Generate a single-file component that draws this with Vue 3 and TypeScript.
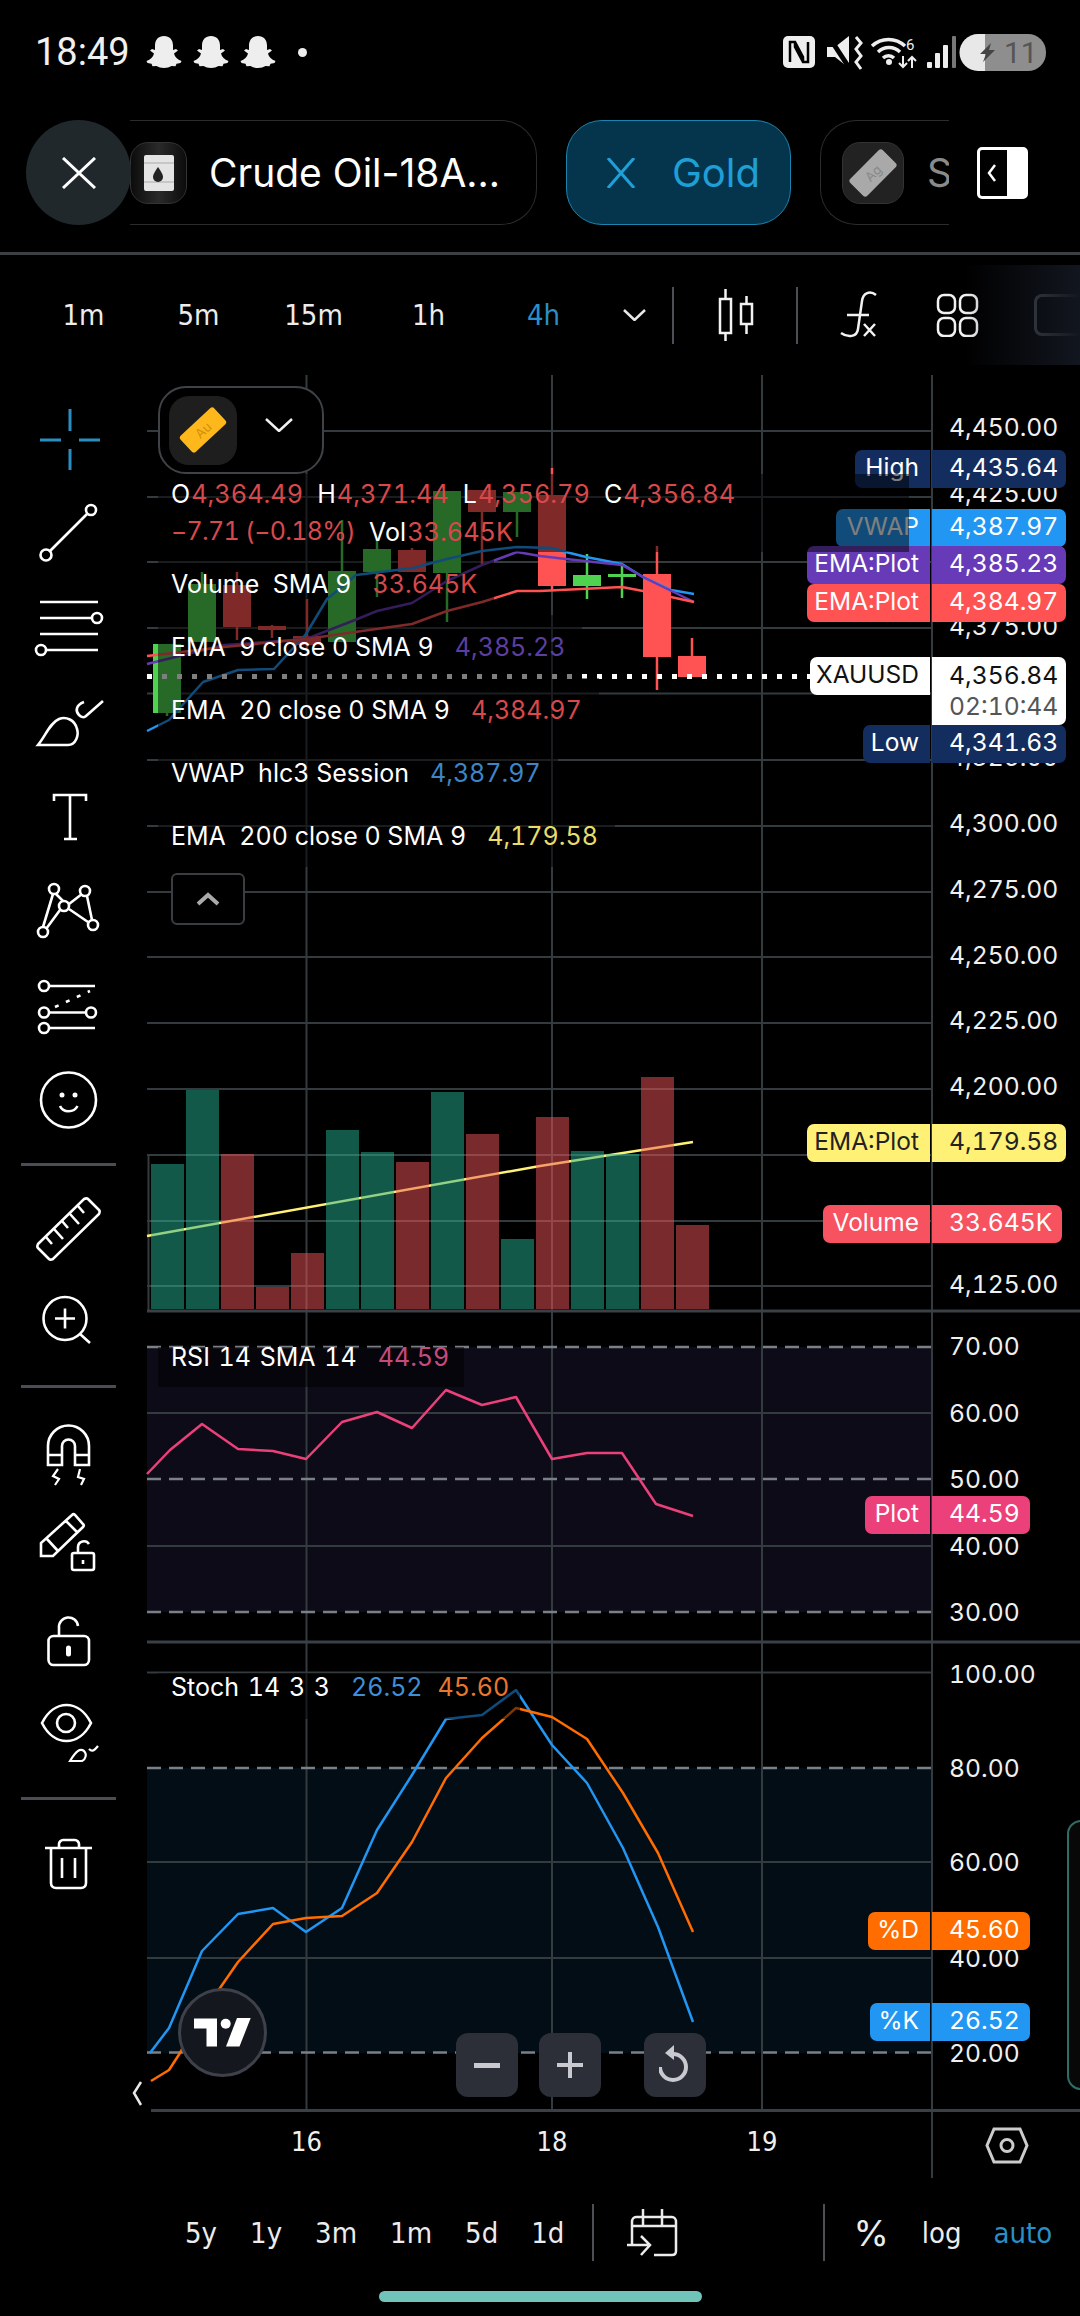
<template>
  <div class="phone">
    <!-- status bar -->
    <div class="status-bar">
      <span class="clock">18:49</span>
      <svg v-for="n in 3" :key="n" class="ghost" viewBox="0 0 36 33">
        <path d="M18 0c5.500 0 9 3.800 9 9.500v4.500l3-1 2 1.500-4 3c.8 3.500 3.500 6 7.500 7.500l-1 2-4 .8-1 2.500-4-.3c-2 1.200-4.500 2-7.500 2s-5.500-.8-7.500-2l-4 .3-1-2.500-4-.8-1-2c4-1.500 6.700-4 7.500-7.500l-4-3 2-1.500 3 1V9.500C9 3.800 12.500 0 18 0z" />
      </svg>
      <span class="status-dot"></span>
      <svg class="status-right" viewBox="770 20 290 70">
        <rect x="783" y="36" width="32" height="32" rx="5" fill="#eee" />
        <path d="M790 62V42h5l8 15v5M808 42v20h-5l-8-15v-5" fill="none" stroke="#000" stroke-width="2.500" />
        <path d="M827 47h8l14-11v32l-14-11h-8z" fill="#eee" />
        <path d="M829 37l21 32" stroke="#000" stroke-width="5" />
        <path d="M856 37l5 6-5 6 5 7-5 6 5 7" fill="none" stroke="#eee" stroke-width="3" />
        <g fill="none" stroke="#eee" stroke-width="3.500">
          <path d="M872 46a24 24 0 0 1 33 0" />
          <path d="M878 52a16 16 0 0 1 22 0" />
          <path d="M883 58a8 8 0 0 1 11 0" />
        </g>
        <circle cx="889" cy="62" r="3" fill="#eee" />
        <text x="906" y="50" class="wifi-six">6</text>
        <path d="M903 56v11m-4-4l4 4 4-4M912 68v-11m-4 4l4-4 4 4" fill="none" stroke="#eee" stroke-width="2" />
        <rect x="927" y="62" width="5" height="6" rx="1" fill="#eee" />
        <rect x="935" y="53" width="5" height="15" rx="1" fill="#eee" />
        <rect x="943" y="45" width="5" height="23" rx="1" fill="#eee" />
        <rect x="952" y="36" width="4" height="32" rx="1" fill="#777" />
        <rect x="967" y="34" width="79" height="37" rx="18" fill="#8e8e8e" />
        <path d="M978 34h7v37h-7a18 18 0 0 1 0-37z" fill="#e8e8e8" />
        <path d="M991 43l-11 11h6l-3 8 12-12h-6z" fill="#444" />
        <text x="1004" y="63" class="battery-text">11</text>
      </svg>
    </div>

    <!-- symbol tabs -->
    <div class="tabs">
      <button class="tabs-close" type="button">
        <svg width="34" height="32" viewBox="0 0 34 32"><path d="M1 1l32 30M33 1L1 31" /></svg>
      </button>
      <div class="tab tab-crude">
        <span class="tab-icon">
          <svg width="30" height="36" viewBox="0 0 30 36">
            <rect width="30" height="36" rx="2" fill="#e4e4e4" />
            <path d="M0 8h30M0 27h30" stroke="#aaa" stroke-width="1" />
            <path d="M14 12c-4 6-5 8-5 10a5 5 0 0 0 10 0c0-2-1-4-5-10z" fill="#222" />
          </svg>
        </span>
        <span class="tab-name">Crude Oil-18A...</span>
      </div>
      <div class="tab tab-gold">
        <svg width="28" height="30" viewBox="0 0 28 30"><path d="M1 0l26 30M27 0L1 30" /></svg>
        <span class="tab-name">Gold</span>
      </div>
      <div class="tab tab-silver">
        <span class="tab-icon">
          <span class="silver-bar">Ag</span>
        </span>
        <span class="tab-name">S</span>
      </div>
      <div class="panel-toggle">
        <svg width="12" height="20" viewBox="0 0 12 20"><path d="M9 2L3 10l6 8" /></svg>
      </div>
    </div>
    <div class="divider"></div>

    <!-- interval toolbar -->
    <div class="toolbar">
      <span v-for="t in intervals" :key="t" class="interval" :class="{ active: t === '4h' }">{{ t }}</span>
      <svg class="toolbar-chevron" width="67" height="12" viewBox="0 0 67 12"><path d="M23 1l10.500 10L44 1" /></svg>
      <span class="toolbar-sep"></span>
      <svg class="toolbar-icon" width="122" height="54" viewBox="674 287 122 54">
        <rect x="720" y="298" width="11" height="34" />
        <path d="M725.500 288v10M725.500 332v8" />
        <rect x="741" y="303" width="11" height="20" />
        <path d="M746.500 295v8M746.500 323v10" />
      </svg>
      <span class="toolbar-sep"></span>
      <svg class="toolbar-icon" width="120" height="50" viewBox="798 290 120 50">
        <path d="M876 295c-6-5-13-2-14 6l-4 28c-1 8-10 9-17 4" />
        <path d="M847 315h22M864 324l11 12M875 324l-11 12" />
      </svg>
      <svg class="toolbar-icon" width="78" height="44" viewBox="918 292 78 44">
        <rect x="938" y="294" width="17" height="18" rx="6" />
        <rect x="960" y="294" width="17" height="18" rx="6" />
        <rect x="938" y="317" width="17" height="18" rx="6" />
        <rect x="960" y="317" width="17" height="18" rx="6" />
      </svg>
      <span class="toolbar-cut"></span>
    </div>

    <!-- chart area -->
    <div class="workspace">
      <div class="sidebar">
        <svg class="tool" width="132" height="110" viewBox="0 370 132 110">
          <path class="blue" d="M40 440h21M79 440h21M70 409v22M70 449v21" />
        </svg>
        <svg class="tool" width="132" height="95" viewBox="0 480 132 95">
          <circle cx="91" cy="510" r="5" /><circle cx="46" cy="555" r="5.500" /><path d="M50 551l37-37" />
        </svg>
        <svg class="tool" width="132" height="95" viewBox="0 575 132 95">
          <path d="M40 602h58M40 618h52M40 634h58M46 650h52" />
          <circle cx="97" cy="618" r="5" /><circle cx="41" cy="650" r="5" />
        </svg>
        <svg class="tool" width="132" height="100" viewBox="0 670 132 100">
          <path d="M38 745h30c8 0 11-10 9-16-2-9-11-13-18-10-9 4-13 16-21 26z" />
          <path d="M84 702c-8 3-9 9-5 13 2 2 5 3 7 1l17-15" />
        </svg>
        <svg class="tool" width="132" height="90" viewBox="0 770 132 90">
          <path d="M54 801v-6h32v6M70 795v44M64 839h13" />
        </svg>
        <svg class="tool" width="132" height="95" viewBox="0 860 132 95">
          <path d="M56 894l7 7M69 904l13-10M87 896l5 24M69 909l19 13M53 894l-10 33M60 910l-14 19" />
          <circle cx="54" cy="889" r="5" /><circle cx="85" cy="891" r="5" /><circle cx="64" cy="906" r="5" />
          <circle cx="93" cy="925" r="5" /><circle cx="43" cy="932" r="5" />
        </svg>
        <svg class="tool" width="132" height="95" viewBox="0 955 132 95">
          <circle cx="44" cy="986" r="5" /><path d="M49 986h46" />
          <path class="dotted" d="M55 1007l35-16" />
          <circle cx="44" cy="1012.500" r="5" /><circle cx="91" cy="1012.500" r="5" /><path d="M49 1012.500h37" />
          <circle cx="44" cy="1028" r="5" /><path d="M49 1028h46" />
        </svg>
        <svg class="tool" width="132" height="100" viewBox="0 1050 132 100">
          <circle cx="68.500" cy="1100" r="27.500" />
          <circle class="solid" cx="62" cy="1095" r="2.500" /><circle class="solid" cx="75" cy="1095" r="2.500" />
          <path d="M60 1106c3 7 14 7 17.500 0" />
        </svg>
        <div class="tool-sep first"></div>
        <svg class="tool" width="132" height="114" viewBox="0 1166 132 114">
          <path d="M38 1244l46-45c2-1 3-1 4 0l11 11c1 1 1 2 0 4l-46 45c-2 1-3 1-4 0l-11-11c-1-1-1-2 0-4z" />
          <path d="M46 1237l6 7M54 1229l9 10M62 1221l6 7M70 1214l9 10M78 1206l6 7" />
        </svg>
        <svg class="tool" width="132" height="105" viewBox="0 1280 132 105">
          <circle cx="65" cy="1318.500" r="21.500" /><path d="M55 1318.500h20M65 1308.500v20M80 1334l10 9" />
        </svg>
        <div class="tool-sep"></div>
        <svg class="tool" width="132" height="111" viewBox="0 1389 132 111">
          <path d="M48 1466v-19a20.500 20.500 0 0 1 41 0v19H75v-19a6.500 6.500 0 0 0-13 0v19zM48 1456h14M75 1456h14" />
          <path class="thin" d="M58 1470l-5 7 6 3-4 6M80 1470l-2 8 6 2-3 6" />
        </svg>
        <svg class="tool" width="132" height="90" viewBox="0 1500 132 90">
          <path d="M41 1557v-13l31-28c1-1 2-1 3 0l8 9c1 1 1 2 0 3l-30 29zM47 1540l11 12M66 1522l11 11" />
          <rect x="72" y="1554" width="22" height="17" rx="2" />
          <path d="M78 1554v-6a6 6 0 0 1 11-3" /><path d="M83 1561v4" />
        </svg>
        <svg class="tool" width="132" height="100" viewBox="0 1590 132 100">
          <rect x="48.500" y="1637" width="40.500" height="29" rx="5" />
          <path d="M59 1637v-8a9.500 9.500 0 0 1 19-2" /><path class="key" d="M68.500 1649v6" />
        </svg>
        <svg class="tool" width="132" height="100" viewBox="0 1690 132 100">
          <path d="M42 1724c12-24 37-24 49 0-12 24-37 24-49 0z" /><circle cx="66" cy="1724" r="9" />
          <path class="thin" d="M70 1762h12c4-2 5-7 2-10-4-3-8 0-14 10zM89 1750c3 3 5 2 9-3" />
        </svg>
        <div class="tool-sep last"></div>
        <svg class="tool" width="132" height="99" viewBox="0 1801 132 99">
          <path d="M45 1849h47M59 1849v-4c0-2 2-4 4-4h12c2 0 4 2 4 4v4M51 1849v35c0 3 2 5 5 5h25c3 0 5-2 5-5v-35M62 1859v20M75 1859v20" />
        </svg>
      </div>

      <div class="chart">
        <svg class="plot" width="948" height="1810" viewBox="132 370 948 1810">
          <rect x="147" y="1347" width="785" height="265" fill="#0d0b17" />
          <rect x="147" y="1768" width="785" height="285" fill="#030d15" />

          <g stroke="#343b3f" stroke-width="2">
            <line v-for="y in gridLines" :key="y" x1="147" x2="932" :y1="y" :y2="y" />
            <line x1="306.500" x2="306.500" y1="375" y2="2110" />
            <line x1="552" x2="552" y1="375" y2="2110" />
            <line x1="762" x2="762" y1="375" y2="2110" />
            <line x1="932" x2="932" y1="375" y2="2178" />
            <line x1="148.500" x2="148.500" y1="1155" y2="1310" />
          </g>
          <g stroke="#3a4045" stroke-width="3">
            <line x1="147" x2="1080" y1="1311" y2="1311" />
            <line x1="147" x2="1080" y1="1642" y2="1642" />
            <line x1="151" x2="1080" y1="2110.500" y2="2110.500" />
          </g>
          <g stroke="#7b7f87" stroke-width="2.500" stroke-dasharray="14 8">
            <line v-for="y in dashLines" :key="y" x1="147" x2="932" :y1="y" :y2="y" />
          </g>

          <!-- EMA 200 sits under the volume columns -->
          <path class="line" d="M147 1236L540 1166L693 1142" stroke="#fff176" />
          <rect
            v-for="(b, i) in volumes"
            :key="i"
            :x="151 + 35 * i"
            :y="b.top"
            width="33"
            :height="1309 - b.top"
            :fill="b.up ? 'rgba(38,178,146,.5)' : 'rgba(239,83,88,.5)'"
          />

          <g v-for="c in candles" :key="c.x">
            <line :x1="c.x" :x2="c.x" :y1="c.hi" :y2="c.lo" :stroke="c.up ? '#4fd24f' : '#ff5252'" stroke-width="2.500" />
            <rect :x="c.x - 14" :y="c.top" width="28" :height="c.bot - c.top" :fill="c.up ? '#4fd24f' : '#ff5252'" />
          </g>

          <path class="line" :d="lineVwap" stroke="#2196f3" />
          <path class="line" :d="lineEma9" stroke="#673ab7" />
          <path class="line" :d="lineEma20" stroke="#ff5252" />
          <line class="price-dots" x1="147" x2="810" y1="676.500" y2="676.500" />

          <path class="line" :d="lineRsi" stroke="#ec407a" />
          <path class="line" :d="lineStochK" stroke="#2196f3" />
          <path class="line" :d="lineStochD" stroke="#ff6d00" />

          <path class="back-chevron" d="M141 2082l-7 11 7 12" />
          <g class="hex">
            <path d="M994 2129h26l7 16.500-7 16.500h-26l-7-16.500z" />
            <circle cx="1007" cy="2145.500" r="6" />
          </g>
        </svg>

        <!-- price scale -->
        <span
          v-for="p in axisLabels"
          :key="p.text + p.y"
          class="axis-label"
          :style="{ top: p.y - 370 + 'px' }"
        >{{ p.text }}</span>

        <!-- last value tags -->
        <div
          v-for="t in tags"
          :key="t.label + t.value"
          class="tag"
          :style="{ top: t.top - 370 + 'px', left: t.left - 132 + 'px', '--tag-bg': t.bg, color: t.fg }"
        >
          <span class="tag-label" :style="{ width: 930 - t.left + 'px' }">{{ t.label }}</span>
          <span class="tag-value" :style="{ width: t.valueWidth + 'px' }">{{ t.value }}</span>
        </div>
        <div class="tag tag-white">
          <span class="tag-label">XAUUSD</span>
          <span class="tag-value tag-stack">
            <span>4,356.84</span>
            <span class="countdown">02:10:44</span>
          </span>
        </div>

        <!-- symbol selector and main legend -->
        <div class="symbol-box">
          <span class="gold-icon">
            <span class="gold-bar">Au</span>
          </span>
          <svg width="28" height="14" viewBox="0 0 28 14"><path d="M1 1l13 12L27 1" /></svg>
        </div>

        <div class="legend">
          <div class="legend-ohlc">
            <div class="ohlc-row">
              <span><i>O</i><b>4,364.49</b></span>
              <span><i>H</i><b>4,371.44</b></span>
              <span><i>L</i><b>4,356.79</b></span>
              <span><i>C</i><b>4,356.84</b></span>
            </div>
            <div class="ohlc-row">
              <span><b class="change">−7.71 (−0.18%)</b></span>
              <span><i>Vol</i><b>33.645K</b></span>
            </div>
          </div>
          <div v-for="row in legendRows" :key="row.name" class="legend-row">
            <span class="legend-name">{{ row.name }}</span>
            <span :style="{ color: row.color }">{{ row.value }}</span>
          </div>
          <div class="legend-collapse">
            <svg width="24" height="14" viewBox="0 0 24 14"><path d="M2 12L12 3l10 9" /></svg>
          </div>
        </div>

        <div class="pane-legend rsi">
          <span class="legend-name">RSI  14 SMA 14</span>
          <span class="val-rsi">44.59</span>
        </div>
        <div class="pane-legend stoch">
          <span class="legend-name">Stoch  14 3 3</span>
          <span class="val-k">26.52</span>
          <span class="val-d">45.60</span>
        </div>

        <div class="tv-logo">
          <svg width="60" height="32" viewBox="193 2020 60 32">
            <path d="M194 2021.500h23v28h-10.500v-18H194z" />
            <circle cx="225.700" cy="2026.700" r="5" />
            <path d="M237 2021h13.700l-11.200 28.500H226z" />
          </svg>
        </div>

        <div class="zoom-controls">
          <button type="button"><span class="zoom-minus"></span></button>
          <button type="button"><span class="zoom-plus"></span></button>
          <button type="button" class="zoom-reset">
            <svg width="32" height="44" viewBox="0 0 32 44">
              <path d="M14 11a13 13 0 1 1-13 13" />
              <path class="arrow" d="M15 2L6 10l9 7z" />
            </svg>
          </button>
        </div>

        <span v-for="d in timeLabels" :key="d.text" class="time-label" :style="{ left: d.x - 132 + 'px' }">{{ d.text }}</span>

        <div class="side-handle"></div>
      </div>
    </div>

    <!-- range bar -->
    <div class="range-bar">
      <span v-for="r in ranges" :key="r" class="range">{{ r }}</span>
      <span class="range-sep"></span>
      <svg class="calendar" width="52" height="50" viewBox="628 2204 52 50">
        <path d="M634 2240v-22c0-3 2-5 4-5h36c2 0 4 2 4 5v29c0 3-2 4-4 4h-18M634 2222h44M645 2205v17M664 2205v17M629 2241h21M643 2232l9 9-9 10" />
      </svg>
      <span class="range-sep second"></span>
      <span class="percent">%</span>
      <span class="scale-log">log</span>
      <span class="scale-auto">auto</span>
    </div>
    <div class="home-indicator"></div>
  </div>
</template>

<script setup lang="ts">
interface Candle {
  x: number
  top: number
  bot: number
  hi: number
  lo: number
  up: boolean
}

const intervals = ['1m', '5m', '15m', '1h', '4h']
const ranges = ['5y', '1y', '3m', '1m', '5d', '1d']

const gridLines = [431, 497, 562, 628, 693.5, 760, 826, 892, 957, 1023, 1089, 1155, 1221, 1286, 1413, 1546, 1672.5, 1862, 1958]
const dashLines = [1347, 1479, 1612, 1768, 2052.5]

const candles: Candle[] = [
  { x: 167, top: 644, bot: 713, hi: 644, lo: 716, up: true },
  { x: 202, top: 584, bot: 642, hi: 572, lo: 642, up: true },
  { x: 237, top: 585, bot: 627, hi: 572, lo: 640, up: false },
  { x: 272, top: 626, bot: 630, hi: 625, lo: 638, up: false },
  { x: 307, top: 636, bot: 645, hi: 599, lo: 650, up: false },
  { x: 342, top: 571, bot: 642, hi: 520, lo: 642, up: true },
  { x: 377, top: 549, bot: 572, hi: 538, lo: 597, up: true },
  { x: 412, top: 550, bot: 572, hi: 548, lo: 572, up: false },
  { x: 447, top: 491, bot: 573, hi: 491, lo: 622, up: true },
  { x: 482, top: 490, bot: 512, hi: 490, lo: 566, up: false },
  { x: 517, top: 492, bot: 512, hi: 492, lo: 537, up: true },
  { x: 552, top: 495, bot: 586, hi: 468, lo: 590, up: false },
  { x: 587, top: 575, bot: 586, hi: 554, lo: 599, up: true },
  { x: 622, top: 574, bot: 577, hi: 564, lo: 598, up: true },
  { x: 657, top: 574, bot: 657, hi: 546, lo: 690, up: false },
  { x: 692, top: 656, bot: 677, hi: 638, lo: 677, up: false }
]

const volumes = [
  { top: 1164, up: true },
  { top: 1090, up: true },
  { top: 1154, up: false },
  { top: 1287, up: false },
  { top: 1253, up: false },
  { top: 1130, up: true },
  { top: 1152, up: true },
  { top: 1162, up: false },
  { top: 1092, up: true },
  { top: 1134, up: false },
  { top: 1239, up: true },
  { top: 1117, up: false },
  { top: 1151, up: true },
  { top: 1154, up: true },
  { top: 1077, up: false },
  { top: 1225, up: false }
]

const lineVwap = 'M147 731L169 720L203 682L238 670L274 669L306 634L327 599L356 575L413 568L447 559L482 551L517 547L552 548L566 552L586 557L622 564L643 577L671 590L694 594'
const lineEma9 = 'M147 664L224 645L306 639L355 620L377 611L412 603L447 581L482 565L517 552L540 556L566 559L622 565L643 577L694 602'
const lineEma20 = 'M147 656L224 647L306 639L355 632L412 624L447 611L482 602L517 591L540 591L622 587L643 591L694 602'
const lineRsi = 'M147 1474L170 1450L202 1424L238 1449L273 1451L306 1459L342 1422L377 1412L412 1428L446 1390L482 1405L516 1397L552 1459L587 1453L622 1453L656 1504L693 1516'
const lineStochK = 'M150 2053L169 2028L202 1951L238 1914L273 1908L306 1932L342 1908L377 1830L412 1775L446 1719L482 1715L516 1690L552 1745L587 1783L623 1848L658 1927L693 2022'
const lineStochD = 'M151 2081L169 2070L180 2053L202 2010L220 1988L238 1962L273 1924L306 1918L342 1916L377 1893L412 1842L446 1778L482 1738L516 1708L552 1717L587 1739L623 1793L658 1853L693 1932'

const axisLabels = [
  { text: '4,450.00', y: 427 },
  { text: '4,425.00', y: 493 },
  { text: '4,375.00', y: 626 },
  { text: '4,325.00', y: 757 },
  { text: '4,300.00', y: 823 },
  { text: '4,275.00', y: 889 },
  { text: '4,250.00', y: 955 },
  { text: '4,225.00', y: 1020 },
  { text: '4,200.00', y: 1086 },
  { text: '4,125.00', y: 1284 },
  { text: '70.00', y: 1346 },
  { text: '60.00', y: 1413 },
  { text: '50.00', y: 1479 },
  { text: '40.00', y: 1546 },
  { text: '30.00', y: 1612 },
  { text: '100.00', y: 1674 },
  { text: '80.00', y: 1768 },
  { text: '60.00', y: 1862 },
  { text: '40.00', y: 1958 },
  { text: '20.00', y: 2053 }
]

const tags = [
  { label: 'High', value: '4,435.64', top: 450, left: 855, bg: '#132d5e', fg: '#fff', valueWidth: 134 },
  { label: 'VWAP', value: '4,387.97', top: 509, left: 836, bg: '#2196f3', fg: '#fff', valueWidth: 134 },
  { label: 'EMA:Plot', value: '4,385.23', top: 546, left: 807, bg: '#673ab7', fg: '#fff', valueWidth: 134 },
  { label: 'EMA:Plot', value: '4,384.97', top: 583.5, left: 807, bg: '#ff5252', fg: '#fff', valueWidth: 134 },
  { label: 'Low', value: '4,341.63', top: 725, left: 863, bg: '#132d5e', fg: '#fff', valueWidth: 134 },
  { label: 'EMA:Plot', value: '4,179.58', top: 1124, left: 807, bg: '#fff176', fg: '#222', valueWidth: 134 },
  { label: 'Volume', value: '33.645K', top: 1205, left: 823, bg: '#f7525f', fg: '#fff', valueWidth: 130 },
  { label: 'Plot', value: '44.59', top: 1496, left: 865, bg: '#ec407a', fg: '#fff', valueWidth: 98 },
  { label: '%D', value: '45.60', top: 1912, left: 868, bg: '#ff6d00', fg: '#fff', valueWidth: 98 },
  { label: '%K', value: '26.52', top: 2003, left: 870, bg: '#2196f3', fg: '#fff', valueWidth: 98 }
]

const legendRows = [
  { name: 'Volume  SMA 9', value: '33.645K', color: '#d9484a' },
  { name: 'EMA  9 close 0 SMA 9', value: '4,385.23', color: '#5b3fa0' },
  { name: 'EMA  20 close 0 SMA 9', value: '4,384.97', color: '#d9484a' },
  { name: 'VWAP  hlc3 Session', value: '4,387.97', color: '#3d85c6' },
  { name: 'EMA  200 close 0 SMA 9', value: '4,179.58', color: '#e8dc6a' }
]

const timeLabels = [
  { text: '16', x: 306.5 },
  { text: '18', x: 552 },
  { text: '19', x: 762 }
]
</script>

<style scoped>
.phone {
  width: 1080px;
  height: 2316px;
  background: #000;
  color: #fff;
  font-family: Inter, "Liberation Sans", sans-serif;
  display: flex;
  flex-direction: column;
  overflow: hidden;
}

/* status bar */
.status-bar {
  height: 120px;
  padding: 0 0 16px 35px;
  box-sizing: border-box;
  display: flex;
  align-items: center;
  position: relative;
}

.clock {
  font-family: Roboto, sans-serif;
  font-size: 38px;
  width: 93px;
  margin-right: 18px;
  color: #f0f0f0;
}

.ghost {
  width: 36px;
  height: 33px;
  margin-right: 11px;
  fill: #eee;
}

.status-dot {
  width: 9px;
  height: 9px;
  margin-left: 11px;
  border-radius: 50%;
  background: #eee;
}

.status-right {
  width: 290px;
  height: 70px;
  margin-left: auto;
  margin-right: 20px;
  margin-top: 5px;
}

.wifi-six {
  font-size: 15px;
  fill: #eee;
  font-family: Roboto, sans-serif;
}

.battery-text {
  font-size: 30px;
  fill: #555;
  font-family: Roboto, sans-serif;
}

/* tabs */
.tabs {
  height: 132px;
  display: flex;
  align-items: flex-start;
  padding-left: 26px;
}

.tabs-close {
  width: 105px;
  height: 105px;
  border: none;
  border-radius: 50%;
  background: #20282c;
  display: flex;
  align-items: center;
  justify-content: center;
  padding: 0;
  position: relative;
  z-index: 1;
}

.tabs-close path {
  stroke: #fff;
  stroke-width: 3;
  fill: none;
}

.tab {
  height: 105px;
  box-sizing: border-box;
  display: flex;
  align-items: center;
  border: 1.5px solid #2c2c2c;
  border-radius: 36px;
  font-size: 39px;
}

.tab-icon {
  width: 57px;
  height: 62px;
  flex: none;
  border-radius: 18px;
  border: 1.5px solid #333;
  box-sizing: border-box;
  background: linear-gradient(90deg, #0c0c0c, #2a2a2a 50%, #0c0c0c);
  display: flex;
  align-items: center;
  justify-content: center;
  overflow: hidden;
}

.tab-crude {
  width: 407px;
  border-left: none;
  border-radius: 0 36px 36px 0;
  margin-left: -1px;
}

.tab-crude .tab-name {
  margin-left: 22px;
  white-space: nowrap;
}

.tab-gold {
  width: 225px;
  margin-left: 29px;
  padding-left: 40px;
  background: #05354d;
  border-color: #1b84ad;
  color: #1f9fd6;
}

.tab-gold path {
  stroke: #1f9fd6;
  stroke-width: 3;
  fill: none;
}

.tab-gold .tab-name {
  margin-left: 37px;
  font-size: 40px;
}

.tab-silver {
  width: 129px;
  margin-left: 29px;
  padding-left: 21px;
  border-right: none;
  border-radius: 36px 0 0 36px;
  overflow: hidden;
}

.tab-silver .tab-icon {
  width: 62px;
  background: #222;
}

.silver-bar {
  width: 46px;
  height: 24px;
  background: #a9a9a9;
  border-radius: 3px;
  transform: rotate(-45deg);
  font-size: 13px;
  color: #888;
  text-align: center;
  line-height: 24px;
}

.tab-silver .tab-name {
  margin-left: 23px;
  color: #8a8a8a;
}

.panel-toggle {
  width: 51px;
  height: 52px;
  margin-left: 28px;
  margin-top: 27px;
  box-sizing: border-box;
  border: 3px solid #fff;
  border-radius: 5px;
  background: linear-gradient(90deg, #000 60%, #fff 60%);
  display: flex;
  align-items: center;
  padding-left: 6px;
}

.panel-toggle path {
  stroke: #fff;
  stroke-width: 2.5;
  fill: none;
}

.divider {
  height: 3px;
  background: #3d4043;
}

/* toolbar */
.toolbar {
  height: 115px;
  padding: 5px 0 0 26px;
  box-sizing: border-box;
  display: flex;
  align-items: center;
  position: relative;
  overflow: hidden;
}

.toolbar::after {
  content: "";
  position: absolute;
  right: 0;
  top: 10px;
  width: 116px;
  height: 100px;
  background: linear-gradient(90deg, rgba(18, 22, 31, 0), #12161f);
}

.interval {
  width: 115px;
  flex: none;
  text-align: center;
  font-family: "DejaVu Sans", sans-serif;
  font-stretch: condensed;
  font-size: 29px;
  color: #ececec;
}

.interval.active {
  color: #2a8fc5;
}

.toolbar-chevron {
  flex: none;
}

.toolbar-chevron path {
  stroke: #e8e8e8;
  stroke-width: 2.5;
  fill: none;
}

.toolbar-sep {
  width: 2px;
  height: 57px;
  flex: none;
  background: #4c4f55;
}

.toolbar-chevron + .toolbar-sep {
  margin-left: 4px;
}

.toolbar-icon {
  flex: none;
}

.toolbar-icon rect,
.toolbar-icon path {
  stroke: #f2f2f2;
  stroke-width: 2.5;
  fill: none;
}

.toolbar-cut {
  width: 60px;
  height: 42px;
  flex: none;
  margin-left: 38px;
  box-sizing: border-box;
  border: 3px solid #5a5e64;
  border-right: none;
  border-radius: 8px 0 0 8px;
}

/* main row */
.workspace {
  height: 1810px;
  display: flex;
}

.sidebar {
  width: 132px;
  flex: none;
  display: flex;
  flex-direction: column;
}

.tool {
  display: block;
  flex: none;
  fill: none;
  stroke: #fff;
  stroke-width: 2.6;
}

.tool .blue {
  stroke: #2a8fc0;
  stroke-width: 3;
}

.tool .solid {
  fill: #fff;
  stroke: none;
}

.tool .dotted {
  stroke-dasharray: 4 8;
}

.tool .thin {
  stroke-width: 2.2;
}

.tool .key {
  stroke-width: 5;
  stroke-linecap: round;
}

.tool-sep {
  width: 95px;
  height: 3px;
  flex: none;
  margin-left: 21px;
  background: #4a4d55;
}

.tool-sep.first {
  margin-top: 13px;
}

.tool-sep.last {
  margin-top: 8px;
}

.chart {
  flex: 1;
  position: relative;
  overflow: hidden;
  font-size: 25px;
  font-variant-numeric: tabular-nums;
}

.plot {
  position: absolute;
  left: 0;
  top: 0;
}

.line {
  fill: none;
  stroke-width: 2.500;
  stroke-linejoin: round;
}

.price-dots {
  stroke: #fff;
  stroke-width: 5;
  stroke-dasharray: 5 10;
}

.back-chevron {
  fill: none;
  stroke: #e8e8e8;
  stroke-width: 2.5;
}

.hex {
  fill: none;
  stroke: #ccc;
  stroke-width: 3;
}

.axis-label {
  position: absolute;
  left: 817px;
  transform: translateY(-50%);
  font-size: 24.700px;
  color: #f0f0f0;
  white-space: nowrap;
}

.tag {
  position: absolute;
  height: 38px;
  display: flex;
  font-size: 24.700px;
  line-height: 34px;
  white-space: nowrap;
}

.tag-label {
  flex: none;
  background: var(--tag-bg);
  border-radius: 7px 0 0 7px;
  padding-right: 11px;
  text-align: right;
  box-sizing: border-box;
  margin-right: 2px;
  font-size: 24.500px;
}

.tag-value {
  background: var(--tag-bg);
  border-radius: 0 7px 7px 0;
  padding-left: 17px;
  box-sizing: border-box;
  flex: none;
}

.tag-white {
  top: 287px;
  left: 678px;
  width: 256px;
  color: #111;
  height: 68px;
}

.tag-white .tag-label {
  height: 38px;
  background: #fff;
  width: 120px;
}

.tag-white .tag-value {
  width: 134px;
  height: 68px;
  background: #fff;
  display: flex;
  flex-direction: column;
  line-height: 31px;
  padding-top: 3px;
}

.countdown {
  color: #555;
}

.symbol-box {
  position: absolute;
  left: 26px;
  top: 16px;
  width: 166px;
  height: 88px;
  box-sizing: border-box;
  border: 2px solid #3f4246;
  border-radius: 28px;
  background: #000;
  display: flex;
  align-items: center;
  padding-left: 9px;
  gap: 28px;
}

.symbol-box svg {
  margin-top: -10px;
}

.symbol-box path {
  stroke: #f0f0f0;
  stroke-width: 2.5;
  fill: none;
}

.gold-icon {
  width: 68px;
  height: 69px;
  border-radius: 20px;
  background: #1e1e1e;
  display: flex;
  align-items: center;
  justify-content: center;
}

.gold-bar {
  width: 46px;
  height: 22px;
  border-radius: 3px;
  background: #ffb81c;
  color: #d0920f;
  font-size: 13px;
  line-height: 22px;
  text-align: center;
  transform: rotate(-43deg);
}

.legend {
  position: absolute;
  left: 26px;
  top: 104px;
  display: flex;
  flex-direction: column;
  font-size: 25px;
}

.legend-ohlc {
  width: 751px;
  height: 78px;
  box-sizing: border-box;
  padding-left: 13px;
  background: rgba(0, 0, 0, 0.5);
}

.ohlc-row {
  height: 38px;
  display: flex;
  align-items: center;
  gap: 14px;
}

.ohlc-row i {
  font-style: normal;
  margin-right: 1px;
}

.ohlc-row b {
  font-weight: 400;
  font-size: 25.300px;
  color: #d9484a;
}

.ohlc-row .change {
  font-size: 25px;
  letter-spacing: -0.7px;
}

.legend-row {
  height: 63px;
  width: fit-content;
  box-sizing: border-box;
  padding: 0 17px 0 13px;
  display: flex;
  align-items: center;
  gap: 21px;
  background: rgba(0, 0, 0, 0.5);
}

.legend-name {
  white-space: pre;
}

.legend-collapse {
  width: 74px;
  height: 52px;
  margin: 6px 0 0 13px;
  box-sizing: border-box;
  border: 2px solid #3a3d42;
  border-radius: 6px;
  background: #000;
  display: flex;
  align-items: center;
  justify-content: center;
}

.legend-collapse path {
  stroke: #aaa;
  stroke-width: 4;
  fill: none;
}

.pane-legend {
  position: absolute;
  left: 26px;
  box-sizing: border-box;
  padding-left: 13px;
  display: flex;
  gap: 21px;
  background: rgba(0, 0, 0, 0.5);
}

.pane-legend .legend-name {
  word-spacing: 2px;
}

.pane-legend.rsi {
  top: 977px;
  width: 306px;
  height: 40px;
  line-height: 20px;
}

.pane-legend.stoch {
  top: 1303px;
  width: 362px;
  height: 46px;
  line-height: 28px;
}

.val-rsi {
  color: #c84a7c;
}

.val-k {
  color: #3f8fd6;
}

.val-d {
  color: #e8762d;
  margin-left: -6px;
}

.tv-logo {
  position: absolute;
  left: 46px;
  top: 1618px;
  width: 89px;
  height: 89px;
  box-sizing: border-box;
  border: 3.500px solid #3e4149;
  border-radius: 50%;
  background: #15171f;
  display: flex;
  align-items: center;
  justify-content: center;
  fill: #fff;
}

.zoom-controls {
  position: absolute;
  left: 324px;
  top: 1663px;
  display: flex;
  gap: 21px;
}

.zoom-controls button {
  width: 62px;
  height: 64px;
  padding: 0;
  border: none;
  border-radius: 12px;
  background: #2c2f38;
  display: flex;
  align-items: center;
  justify-content: center;
}

.zoom-controls .zoom-reset {
  margin-left: 22px;
}

.zoom-minus {
  width: 26px;
  height: 5px;
  background: #c8cad0;
}

.zoom-plus {
  width: 26px;
  height: 26px;
  background:
    linear-gradient(#c8cad0, #c8cad0) center / 100% 4px no-repeat,
    linear-gradient(#c8cad0, #c8cad0) center / 4px 100% no-repeat;
}

.zoom-reset path {
  fill: none;
  stroke: #c8cad0;
  stroke-width: 4;
}

.zoom-reset .arrow {
  fill: #c8cad0;
  stroke: none;
}

.time-label {
  position: absolute;
  top: 1756px;
  transform: translateX(-50%);
  font-family: "DejaVu Sans", sans-serif;
  font-stretch: condensed;
  font-size: 27px;
  color: #f0f0f0;
}

.side-handle {
  position: absolute;
  left: 935px;
  top: 1450px;
  width: 30px;
  height: 270px;
  box-sizing: border-box;
  border: 2px solid #2f6e66;
  border-radius: 14px;
  background: #080808;
}

/* range bar */
.range-bar {
  height: 105px;
  padding-left: 185px;
  box-sizing: border-box;
  display: flex;
  align-items: center;
  font-family: "DejaVu Sans", sans-serif;
  font-stretch: condensed;
  font-size: 29px;
  color: #ececec;
}

.range {
  flex: none;
  margin-right: 33px;
}

.range-sep {
  flex: none;
  width: 2px;
  height: 57px;
  background: #4c4f55;
  margin-left: -5px;
}

.range-sep.second {
  margin-left: 145px;
}

.calendar {
  flex: none;
  margin-left: 32px;
  fill: none;
  stroke: #ececec;
  stroke-width: 2.500;
}

.percent {
  font-family: Inter, sans-serif;
  font-size: 36px;
  margin-left: 28px;
}

.scale-log {
  margin-left: 33px;
}

.scale-auto {
  margin-left: 32px;
  color: #2a8fc5;
}

.home-indicator {
  width: 323px;
  height: 11px;
  margin: 6px auto 0;
  border-radius: 6px;
  background: #71c4b9;
}
</style>

<style>
html,
body {
  margin: 0;
  background: #000;
}
</style>
